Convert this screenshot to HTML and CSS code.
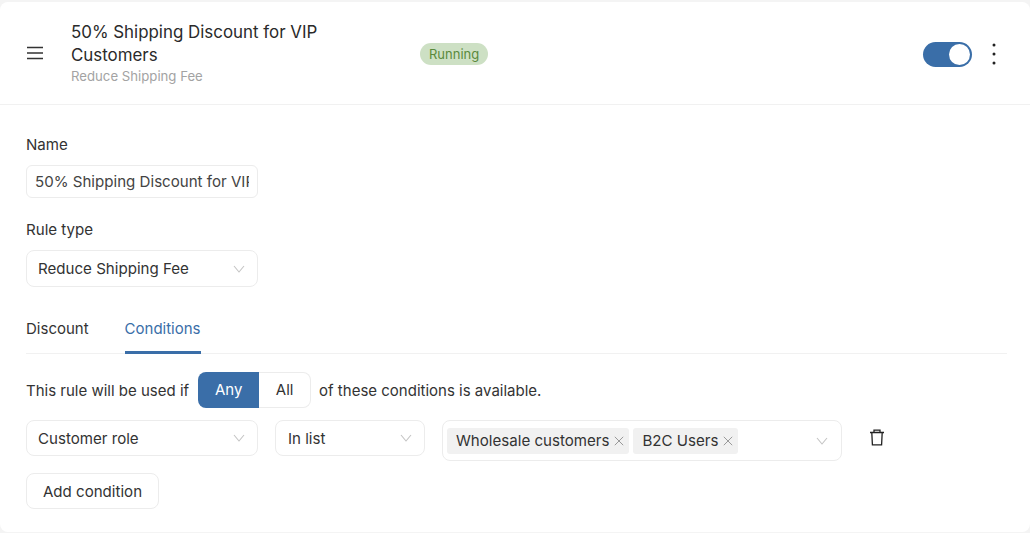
FILE: index.html
```html
<!DOCTYPE html>
<html lang="en">
<head>
<meta charset="utf-8">
<title>Rule</title>
<link rel="stylesheet" href="styles.css">
</head>
<body>
<main class="card">
  <header class="head">
    <svg class="menu" width="18" height="14" viewBox="0 0 18 14"><path d="M1 1.5h16M1 7h16M1 12.5h16" stroke="#333" stroke-width="1.6" fill="none"/></svg>
    <div class="titles">
      <h1 class="title">50% Shipping Discount for VIP Customers</h1>
      <p class="sub">Reduce Shipping Fee</p>
    </div>
    <span class="badge">Running</span>
    <span class="toggle"><span class="knob"></span></span>
    <svg class="more" width="4" height="22" viewBox="0 0 4 22"><circle cx="2" cy="2" r="1.5" fill="#222"/><circle cx="2" cy="11" r="1.5" fill="#222"/><circle cx="2" cy="20" r="1.5" fill="#222"/></svg>
  </header>
  <section class="body">
    <label class="label">Name</label>
    <div class="input"><span class="input-text">50% Shipping Discount for VIP Customers</span></div>
    <label class="label label-2">Rule type</label>
    <div class="select w232 tall"><span>Reduce Shipping Fee</span>
      <svg class="chev" width="12" height="8" viewBox="0 0 12 8"><path d="M1 1l5 6 5-6" fill="none" stroke="#c4c4c4" stroke-width="1.1"/></svg></div>
    <nav class="tabs">
      <span class="tab">Discount</span>
      <span class="tab active">Conditions</span>
    </nav>
    <div class="sentence">
      <span>This rule will be used if</span>
      <span class="seg"><span class="seg-a">Any</span><span class="seg-b">All</span></span>
      <span>of these conditions is available.</span>
    </div>
    <div class="cond">
      <div class="select w232"><span>Customer role</span>
        <svg class="chev" width="12" height="8" viewBox="0 0 12 8"><path d="M1 1l5 6 5-6" fill="none" stroke="#c4c4c4" stroke-width="1.1"/></svg></div>
      <div class="select w150"><span>In list</span>
        <svg class="chev" width="12" height="8" viewBox="0 0 12 8"><path d="M1 1l5 6 5-6" fill="none" stroke="#c4c4c4" stroke-width="1.1"/></svg></div>
      <div class="multi">
        <span class="tag">Wholesale customers<svg width="10" height="10" viewBox="0 0 10 10"><path d="M.8.8l8.4 8.4M9.2.8L.8 9.2" stroke="#999" stroke-width="1"/></svg></span>
        <span class="tag">B2C Users<svg width="10" height="10" viewBox="0 0 10 10"><path d="M.8.8l8.4 8.4M9.2.8L.8 9.2" stroke="#999" stroke-width="1"/></svg></span>
        <svg class="chev" width="12" height="8" viewBox="0 0 12 8"><path d="M1 1l5 6 5-6" fill="none" stroke="#c4c4c4" stroke-width="1.1"/></svg>
      </div>
      <svg class="trash" width="16" height="17" viewBox="0 0 16 17"><path d="M1 3.5h14M5 3.5V1.2h6v2.3M2.8 3.5l.6 12.3h9.2l.6-12.3" fill="none" stroke="#222" stroke-width="1.3"/></svg>
    </div>
    <button class="add" type="button">Add condition</button>
  </section>
</main>
</body>
</html>
```
FILE: styles.css
```css
* { box-sizing: border-box; }
html, body { margin: 0; height: 533px; overflow: hidden; background: #f4f4f4; }
body { font-family: Inter, "Liberation Sans", sans-serif; font-size: 15.1px; color: #333; }
.card { background: #fff; height: 530px; margin-top: 2px; border-radius: 8px; }
.head { height: 103px; display: flex; align-items: center; padding: 0 0 0 26px; border-bottom: 1px solid #f1f1f1; }
.menu { flex: none; margin-top: -1px; }
.titles { width: 270px; margin: -2px 0 0 27px; }
.title { margin: 0; font-size: 16.9px; font-weight: 400; line-height: 23px; color: #2a2a2a; }
.sub { margin: 1px 0 0; font-size: 13.2px; line-height: 16px; color: #a3a3a3; }
.badge { margin-left: 79px; height: 22px; padding: 0 9px; border-radius: 11px; background: #cde0c4; color: #5a8a3c; font-size: 13px; line-height: 22px; margin-top: 2px; }
.toggle { margin-left: auto; width: 49px; height: 25px; margin-top: 2px; border-radius: 13px; background: #3a6ea8; display: flex; align-items: center; justify-content: flex-end; padding-right: 2px; }
.knob { width: 21px; height: 21px; border-radius: 50%; background: #fff; }
.more { margin: 2px 34px 0 20px; }
.body { padding: 0 23px 0 26px; }
.label { display: block; margin-top: 31px; line-height: 18px; color: #333; }
.label-2 { margin-top: 23px; }
.input { width: 232px; height: 33px; margin-top: 11px; border: 1px solid #ececec; border-radius: 6px; padding: 0 8px; line-height: 31px; color: #444; overflow: hidden; }
.input-text { display: block; white-space: nowrap; overflow: hidden; }
.label-2 + .select { margin-top: 11px; }
.select { height: 36px; border: 1px solid #ececec; border-radius: 8px; display: flex; align-items: center; justify-content: space-between; padding: 0 12px 0 11px; flex: none; }
.tall { height: 37px; }
.w232 { width: 232px; }
.w150 { width: 150px; padding-left: 12px; }
.tabs { display: flex; gap: 35px; margin-top: 28px; height: 39px; border-bottom: 1px solid #f1f1f1; font-size: 15px; }
.tab { line-height: 26px; height: 39px; padding-top: 1px; }
.tab.active { color: #3a6ea8; border-bottom: 3px solid #3a6ea8; margin-left: 1px; }
.sentence { display: flex; align-items: center; margin-top: 18px; height: 36px; font-size: 15px; }
.seg { display: flex; height: 36px; line-height: 34px; margin: 0 8px 0 9px; }
.seg-a { width: 61px; text-align: center; background: #3a6ea8; color: #fff; border-radius: 8px 0 0 8px; line-height: 36px; }
.seg-b { width: 52px; text-align: center; border: 1px solid #ececec; border-left: 0; border-radius: 0 8px 8px 0; }
.cond { display: flex; align-items: flex-start; gap: 17px; margin-top: 12px; }
.multi { width: 400px; height: 41px; border: 1px solid #ececec; border-radius: 8px; display: flex; align-items: center; gap: 4px; padding: 0 4px; flex: none; }
.multi .chev { margin-left: auto; margin-right: 9px; }
.tag { height: 26px; display: flex; align-items: center; gap: 5px; padding: 0 5px 0 9px; background: #f1f1f1; border-radius: 3px; }
.trash { margin: 9px 0 0 10px; flex: none; }
.add { display: block; margin-top: 12px; width: 133px; height: 36px; padding: 0; background: #fff; border: 1px solid #ececec; border-radius: 8px; font: inherit; color: #333; }
```
